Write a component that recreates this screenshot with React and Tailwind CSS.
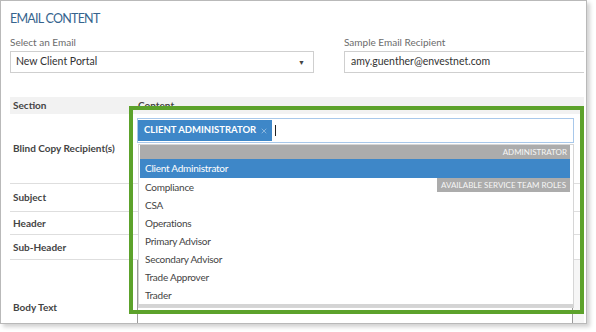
import { X } from 'lucide-react';

const roles = ['Compliance', 'CSA', 'Operations', 'Primary Advisor', 'Secondary Advisor', 'Trade Approver', 'Trader'];

const rows = [
  { label: 'Subject', h: 'h-[28px]' },
  { label: 'Header', h: 'h-[23px]' },
  { label: 'Sub-Header', h: 'h-[25px]' },
];

export default function App() {
  return (
    <div className="w-[596px] h-[332px] bg-white font-['Lato',sans-serif]">
      <div className="relative w-[587px] h-[324px] border border-[#b9b9b9] bg-white overflow-hidden shadow-[3px_3px_4px_rgba(0,0,0,0.18)]">
        <div className="pl-[9px] pr-[2px] pt-[9px]">
          {/* Title */}
          <h2 className="text-[12.5px] leading-[18px] text-[#36648e] tracking-[-0.75px]">EMAIL CONTENT</h2>

          {/* Email selectors */}
          <div className="flex mt-[7px]">
            <div className="w-[304px]">
              <p className="text-[10px] leading-[14px] text-[#6b6b6b]">Select an Email</p>
              <div className="mt-[2px] h-[22px] border border-[#cfcfcf] flex items-center justify-between pl-[5px] pr-[8px]">
                <span className="text-[10.5px] text-[#333]">New Client Portal</span>
                <span className="text-[7px] text-[#444]">▼</span>
              </div>
            </div>
            <div className="ml-[30px] flex-1">
              <p className="text-[10px] leading-[14px] text-[#6b6b6b]">Sample Email Recipient</p>
              <div className="mt-[2px] h-[22px] border border-[#cfcfcf] border-r-0 flex items-center pl-[6px]">
                <span className="text-[10.5px] text-[#333]">amy.guenther@envestnet.com</span>
              </div>
            </div>
          </div>

          {/* Table */}
          <div className="mt-[24px]">
            <div className="flex h-[17px] bg-[#f2f2f2] text-[10px] font-bold text-[#444]">
              <div className="w-[127px] pl-[3px] leading-[17px]">Section</div>
              <div className="leading-[17px] pl-[1px]">Content</div>
            </div>

            <div className="flex h-[70px] border-b border-[#dedede]">
              <div className="w-[127px] pl-[3px] flex items-center text-[10px] font-bold text-[#444]">
                Blind Copy Recipient(s)
              </div>
              <div className="flex-1 pt-[4px] pr-[10px]">
                <div className="h-[25px] border border-[#a8c8ea] flex items-center p-[1px] pl-0">
                  <div className="h-full bg-[#3e87c8] flex items-center pl-[6px] pr-[4px] gap-[4px]">
                    <span className="text-[9.5px] font-bold text-white">CLIENT ADMINISTRATOR</span>
                    <X size={8} strokeWidth={1.5} className="text-[#d8e6f4]" />
                  </div>
                  <div className="ml-[3px] w-px h-[11px] bg-[#222]" />
                </div>
              </div>
            </div>

            {rows.map((r) => (
              <div key={r.label} className={`flex ${r.h} border-b border-[#dedede]`}>
                <div className="w-[127px] pl-[3px] flex items-center text-[10px] font-bold text-[#444]">
                  {r.label}
                </div>
                <div className="flex-1" />
              </div>
            ))}

            <div className="flex h-[94px]">
              <div className="w-[127px] pl-[3px] flex items-center text-[10px] font-bold text-[#444]">
                Body Text
              </div>
              <div className="flex-1 border-l border-[#9a9a9a] flex justify-end">
                <div className="w-[12px] bg-[#f6f6f6] border-l border-[#9a9a9a]" />
              </div>
            </div>
          </div>
        </div>

        {/* Dropdown list */}
        <div className="absolute left-[137px] top-[143px] w-[436px] h-[164px] bg-white border border-[#d6d6d6] pl-[1px] pr-[3px] flex flex-col">
          <div className="h-[14px] bg-[#acacac] flex items-center justify-end pr-[3px] text-[8px] text-[#f6f6f6]">
            ADMINISTRATOR
          </div>
          <div className="h-[19px] bg-[#3e87c8] flex items-center pl-[5px] text-[10px] tracking-[-0.25px] text-white">
            Client Administrator
          </div>
          <div className="relative flex-1">
            <div className="absolute right-0 top-0 h-[14px] bg-[#acacac] flex items-center px-[4px] text-[8px] text-[#f6f6f6]">
              AVAILABLE SERVICE TEAM ROLES
            </div>
            {roles.map((r) => (
              <div key={r} className="h-[18px] flex items-center pl-[5px] text-[10px] tracking-[-0.25px] text-[#444]">
                {r}
              </div>
            ))}
          </div>
          <div className="h-[3px] bg-[#d4d4d4] -ml-[1px] -mr-[3px]" />
        </div>

        {/* Highlight frame */}
        <div className="absolute left-[128px] top-[105px] w-[455px] h-[208px] border-4 border-[#5ca22b] pointer-events-none" />
      </div>
    </div>
  );
}
